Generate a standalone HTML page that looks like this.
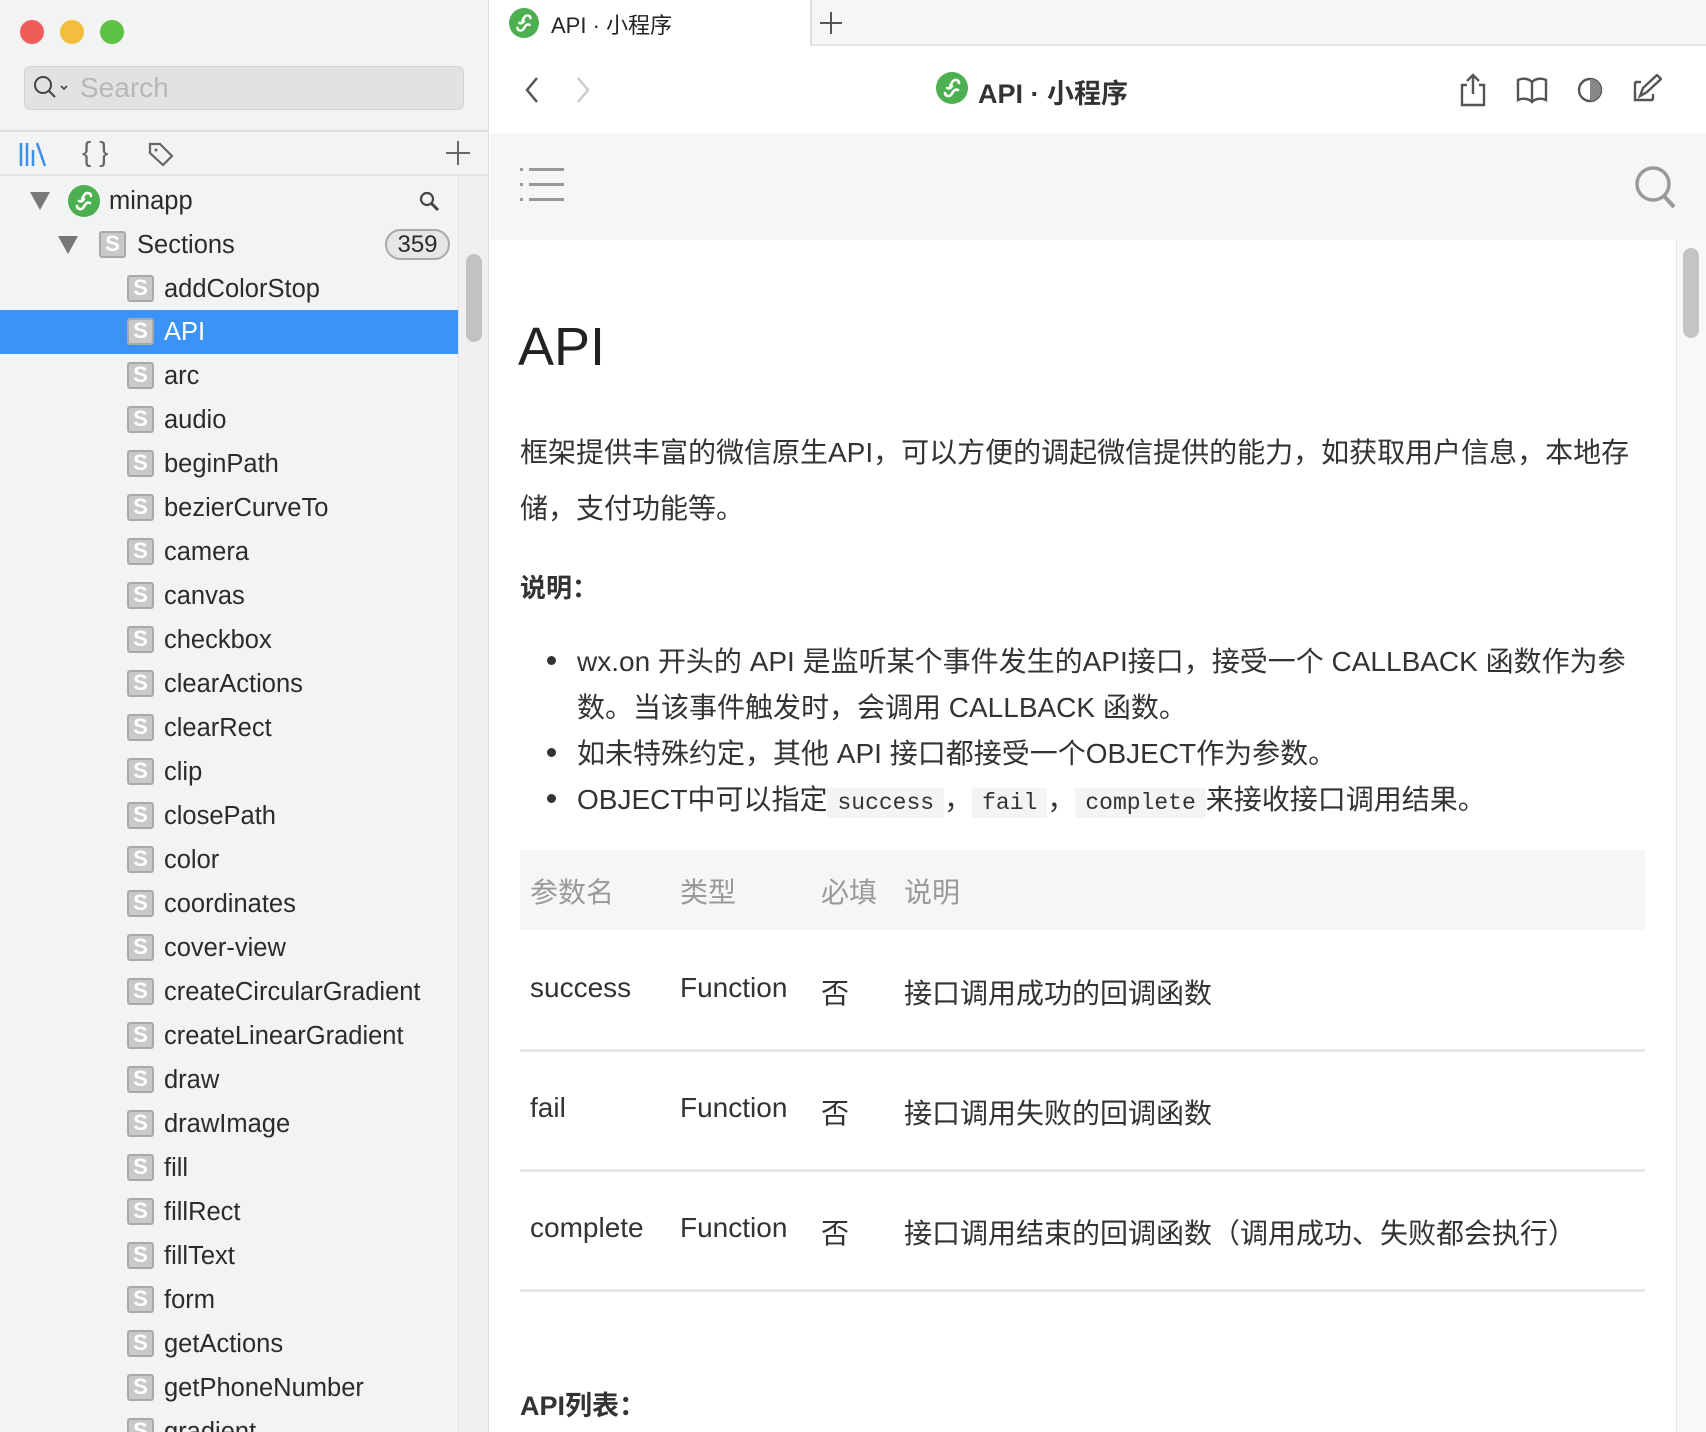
<!DOCTYPE html>
<html><head><meta charset="utf-8"><style>
*{margin:0;padding:0;box-sizing:border-box}
body{width:1706px;height:1432px;overflow:hidden;position:relative;background:#fff;font-family:"Liberation Sans","Noto Sans CJK SC",sans-serif;color:#333}
.a{position:absolute;white-space:nowrap}
#side{position:absolute;left:0;top:0;width:489px;height:1432px;background:#f2f3f4;border-right:1px solid #ddd;overflow:hidden}
.dot{position:absolute;top:20px;width:24px;height:24px;border-radius:50%}
.row{position:absolute;left:0;width:458px;height:44px;font-size:25.5px;line-height:44px;color:#2b2b2b}
.si{position:absolute;top:8px;width:27px;height:27px;background:#c9c9c9;border:2px solid #a9a9a9;border-radius:3px;color:#fff;font-weight:bold;font-size:22px;line-height:22px;text-align:center}
.row .t{position:absolute;top:0}
.c{font-size:28px;color:#333}
code{font-family:"Liberation Mono",monospace;font-size:23px;background:#f4f4f4;padding:2px 10px;color:#333}
.hl{position:absolute;left:520px;width:1125px;height:3px;background:#e8e8e8}
.bul{position:absolute;left:547px;width:9px;height:9px;border-radius:50%;background:#333}
</style></head><body>
<svg width="0" height="0" style="position:absolute"><defs><symbol id="lg" viewBox="0 0 32 32"><circle cx="16" cy="16" r="16" fill="#4caf50"/><path d="M9 21c0 3 4 4 6 2l2-3c1-2 3-3 5-2M16 14c-1 2-3 3-5 2M23 11c0-3-4-4-6-2l-2 3c-1 2-1 3-1 4" fill="none" stroke="#fff" stroke-width="2.6" stroke-linecap="round"/></symbol></defs></svg>
<div id="side">
 <div class="dot" style="left:20px;background:#ed5e56"></div>
 <div class="dot" style="left:60px;background:#f5bd3f"></div>
 <div class="dot" style="left:100px;background:#5cc144"></div>
 <div class="a" style="left:24px;top:66px;width:440px;height:44px;background:#e1e2e4;border:1px solid #d3d4d6;border-radius:6px"></div>
 <svg class="a" style="left:32px;top:74px" width="44" height="28"><circle cx="11" cy="11" r="8" fill="none" stroke="#444" stroke-width="2"/><line x1="17" y1="17" x2="23" y2="23" stroke="#444" stroke-width="2"/><path d="M29 12l3 3 3-3" fill="none" stroke="#444" stroke-width="1.6"/></svg>
 <div class="a" style="left:80px;top:72px;font-size:28px;color:#b8b8b8">Search</div>
 <div class="a" style="left:0;top:130px;width:489px;height:2px;background:#dedede"></div>
 <svg class="a" style="left:18px;top:140px" width="30" height="28"><path d="M3 3v23M9 3v23M15 10v16M19 3l8 23" stroke="#3a8ef0" stroke-width="2.5" fill="none"/></svg>
 <div class="a" style="left:82px;top:136px;font-size:28px;color:#666">{ }</div>
 <svg class="a" style="left:146px;top:140px" width="30" height="28"><path d="M4 4h10l12 12-9 9L4 13z" fill="none" stroke="#666" stroke-width="2.2"/><circle cx="10" cy="10" r="1.5" fill="#666"/></svg>
 <svg class="a" style="left:446px;top:141px" width="24" height="24"><path d="M12 0v24M0 12h24" stroke="#666" stroke-width="2"/></svg>
 <div class="a" style="left:0;top:174px;width:489px;height:2px;background:#e2e2e2"></div>
 <div class="a" style="left:458px;top:176px;width:31px;height:1256px;background:#f0f0f0;border-left:1px solid #e0e0e0"></div>
 <div class="a" style="left:466px;top:254px;width:16px;height:88px;background:#c2c2c2;border-radius:8px"></div>

 <div class="row" style="top:179px">
  <svg class="a" style="left:30px;top:13px" width="20" height="18"><path d="M0 0h20L10 18z" fill="#777"/></svg>
  <svg class="a" style="left:68px;top:6px" width="32" height="32"><use href="#lg"/></svg>
  <div class="t" style="left:109px">minapp</div>
  <svg class="a" style="left:419px;top:12px" width="22" height="22"><circle cx="8" cy="8" r="6" fill="none" stroke="#444" stroke-width="2.2"/><line x1="12" y1="12" x2="19" y2="19" stroke="#444" stroke-width="3"/></svg>
 </div>
 <div class="row" style="top:223px">
  <svg class="a" style="left:58px;top:13px" width="20" height="18"><path d="M0 0h20L10 18z" fill="#777"/></svg>
  <div class="si" style="left:99px">S</div>
  <div class="t" style="left:137px">Sections</div>
  <div class="a" style="left:385px;top:6px;width:65px;height:31px;border:2px solid #aaa;background:#e6e6e6;border-radius:16px;font-size:24px;line-height:27px;text-align:center">359</div>
 </div>
 <div class="row" style="top:267px"><div class="si" style="left:127px">S</div><div class="t" style="left:164px">addColorStop</div></div>
 <div class="row" style="top:310px;height:44px;background:#3b93f7;color:#fff"><div class="si" style="left:127px">S</div><div class="t" style="left:164px">API</div></div>
 <div class="row" style="top:354px"><div class="si" style="left:127px">S</div><div class="t" style="left:164px">arc</div></div>
 <div class="row" style="top:398px"><div class="si" style="left:127px">S</div><div class="t" style="left:164px">audio</div></div>
 <div class="row" style="top:442px"><div class="si" style="left:127px">S</div><div class="t" style="left:164px">beginPath</div></div>
 <div class="row" style="top:486px"><div class="si" style="left:127px">S</div><div class="t" style="left:164px">bezierCurveTo</div></div>
 <div class="row" style="top:530px"><div class="si" style="left:127px">S</div><div class="t" style="left:164px">camera</div></div>
 <div class="row" style="top:574px"><div class="si" style="left:127px">S</div><div class="t" style="left:164px">canvas</div></div>
 <div class="row" style="top:618px"><div class="si" style="left:127px">S</div><div class="t" style="left:164px">checkbox</div></div>
 <div class="row" style="top:662px"><div class="si" style="left:127px">S</div><div class="t" style="left:164px">clearActions</div></div>
 <div class="row" style="top:706px"><div class="si" style="left:127px">S</div><div class="t" style="left:164px">clearRect</div></div>
 <div class="row" style="top:750px"><div class="si" style="left:127px">S</div><div class="t" style="left:164px">clip</div></div>
 <div class="row" style="top:794px"><div class="si" style="left:127px">S</div><div class="t" style="left:164px">closePath</div></div>
 <div class="row" style="top:838px"><div class="si" style="left:127px">S</div><div class="t" style="left:164px">color</div></div>
 <div class="row" style="top:882px"><div class="si" style="left:127px">S</div><div class="t" style="left:164px">coordinates</div></div>
 <div class="row" style="top:926px"><div class="si" style="left:127px">S</div><div class="t" style="left:164px">cover-view</div></div>
 <div class="row" style="top:970px"><div class="si" style="left:127px">S</div><div class="t" style="left:164px">createCircularGradient</div></div>
 <div class="row" style="top:1014px"><div class="si" style="left:127px">S</div><div class="t" style="left:164px">createLinearGradient</div></div>
 <div class="row" style="top:1058px"><div class="si" style="left:127px">S</div><div class="t" style="left:164px">draw</div></div>
 <div class="row" style="top:1102px"><div class="si" style="left:127px">S</div><div class="t" style="left:164px">drawImage</div></div>
 <div class="row" style="top:1146px"><div class="si" style="left:127px">S</div><div class="t" style="left:164px">fill</div></div>
 <div class="row" style="top:1190px"><div class="si" style="left:127px">S</div><div class="t" style="left:164px">fillRect</div></div>
 <div class="row" style="top:1234px"><div class="si" style="left:127px">S</div><div class="t" style="left:164px">fillText</div></div>
 <div class="row" style="top:1278px"><div class="si" style="left:127px">S</div><div class="t" style="left:164px">form</div></div>
 <div class="row" style="top:1322px"><div class="si" style="left:127px">S</div><div class="t" style="left:164px">getActions</div></div>
 <div class="row" style="top:1366px"><div class="si" style="left:127px">S</div><div class="t" style="left:164px">getPhoneNumber</div></div>
 <div class="row" style="top:1410px"><div class="si" style="left:127px">S</div><div class="t" style="left:164px">gradient</div></div>
</div>

<!-- tab bar -->
<div class="a" style="left:810px;top:0;width:896px;height:46px;background:#f6f6f6;border-left:2px solid #ddd;border-bottom:2px solid #e4e4e4"></div>
<svg class="a" style="left:509px;top:8px" width="30" height="30"><use href="#lg"/></svg>
<div class="a" style="left:551px;top:8px;font-size:22px;color:#222">API · 小程序</div>
<svg class="a" style="left:820px;top:12px" width="22" height="22"><path d="M11 0v22M0 11h22" stroke="#555" stroke-width="2"/></svg>
<!-- toolbar -->
<svg class="a" style="left:524px;top:76px" width="16" height="28"><path d="M13 2L3 14l10 12" fill="none" stroke="#555" stroke-width="2.5"/></svg>
<svg class="a" style="left:575px;top:76px" width="16" height="28"><path d="M3 2l10 12L3 26" fill="none" stroke="#ccc" stroke-width="2.5"/></svg>
<svg class="a" style="left:936px;top:72px" width="32" height="32"><use href="#lg"/></svg>
<div class="a" style="left:978px;top:72px;font-size:27px;font-weight:bold;color:#333">API · 小程序</div>
<svg class="a" style="left:1458px;top:73px" width="30" height="34"><path d="M9 12H4v20h22V12h-5M15 2v19M9 8l6-6 6 6" fill="none" stroke="#555" stroke-width="2.4"/></svg>
<svg class="a" style="left:1516px;top:76px" width="32" height="28"><path d="M16 6C12 2 6 2 2 4v20c4-2 10-2 14 2 4-4 10-4 14-2V4c-4-2-10-2-14 2zM16 6v20" fill="none" stroke="#555" stroke-width="2.4"/></svg>
<svg class="a" style="left:1576px;top:76px" width="28" height="28"><circle cx="14" cy="14" r="11" fill="none" stroke="#555" stroke-width="2.4"/><path d="M14 3a11 11 0 010 22z" fill="#888"/></svg>
<svg class="a" style="left:1632px;top:74px" width="30" height="30"><path d="M3 8v18h18M3 8h6M21 26v-6" fill="none" stroke="#555" stroke-width="2.4"/><path d="M8 22l3-8 14-13 4 4-14 13z" fill="none" stroke="#555" stroke-width="2.4"/></svg>
<!-- gray header -->
<div class="a" style="left:490px;top:133px;width:1216px;height:107px;background:#f5f6f7"></div>
<svg class="a" style="left:520px;top:166px" width="46" height="40"><g fill="#999"><rect x="0" y="2" width="3" height="3"/><rect x="0" y="17" width="3" height="3"/><rect x="0" y="32" width="3" height="3"/><rect x="9" y="2" width="35" height="3"/><rect x="9" y="17" width="35" height="3"/><rect x="9" y="32" width="35" height="3"/></g></svg>
<svg class="a" style="left:1634px;top:165px" width="44" height="46"><circle cx="19" cy="19" r="16" fill="none" stroke="#999" stroke-width="3.5"/><line x1="30" y1="31" x2="40" y2="42" stroke="#999" stroke-width="4"/></svg>
<!-- scrollbar -->
<div class="a" style="left:1676px;top:240px;width:30px;height:1192px;background:#f8f8f8;border-left:1px solid #e6e6e6"></div>
<div class="a" style="left:1683px;top:248px;width:16px;height:90px;background:#c4c4c4;border-radius:8px"></div>
<!-- content -->
<div class="a" style="left:518px;top:316px;font-size:54px;color:#222">API</div>
<div class="a c" style="left:520px;top:431px">框架提供丰富的微信原生API，可以方便的调起微信提供的能力，如获取用户信息，本地存</div>
<div class="a c" style="left:520px;top:487px">储，支付功能等。</div>
<div class="a c" style="left:520px;top:568px;font-weight:bold;font-size:26px">说明：</div>
<div class="bul" style="top:656px"></div>
<div class="a c" style="left:577px;top:640px">wx.on 开头的 API 是监听某个事件发生的API接口，接受一个 CALLBACK 函数作为参</div>
<div class="a c" style="left:577px;top:686px">数。当该事件触发时，会调用 CALLBACK 函数。</div>
<div class="bul" style="top:748px"></div>
<div class="a c" style="left:577px;top:732px">如未特殊约定，其他 API 接口都接受一个OBJECT作为参数。</div>
<div class="bul" style="top:794px"></div>
<div class="a c" style="left:577px;top:778px">OBJECT中可以指定<code>success</code>，<code>fail</code>，<code>complete</code>来接收接口调用结果。</div>
<div class="a" style="left:520px;top:850px;width:1125px;height:80px;background:#f5f6f7"></div>
<div class="a c" style="left:530px;top:871px;color:#999">参数名</div>
<div class="a c" style="left:680px;top:871px;color:#999">类型</div>
<div class="a c" style="left:821px;top:871px;color:#999">必填</div>
<div class="a c" style="left:904px;top:871px;color:#999">说明</div>
<div class="a c" style="left:530px;top:972px">success</div><div class="a c" style="left:680px;top:972px">Function</div><div class="a c" style="left:821px;top:972px">否</div><div class="a c" style="left:904px;top:972px">接口调用成功的回调函数</div>
<div class="hl" style="top:1049px"></div>
<div class="a c" style="left:530px;top:1092px">fail</div><div class="a c" style="left:680px;top:1092px">Function</div><div class="a c" style="left:821px;top:1092px">否</div><div class="a c" style="left:904px;top:1092px">接口调用失败的回调函数</div>
<div class="hl" style="top:1169px"></div>
<div class="a c" style="left:530px;top:1212px">complete</div><div class="a c" style="left:680px;top:1212px">Function</div><div class="a c" style="left:821px;top:1212px">否</div><div class="a c" style="left:904px;top:1212px">接口调用结束的回调函数（调用成功、失败都会执行）</div>
<div class="hl" style="top:1289px"></div>
<div class="a c" style="left:520px;top:1384px;font-weight:bold;font-size:27px">API列表：</div>
</body></html>
